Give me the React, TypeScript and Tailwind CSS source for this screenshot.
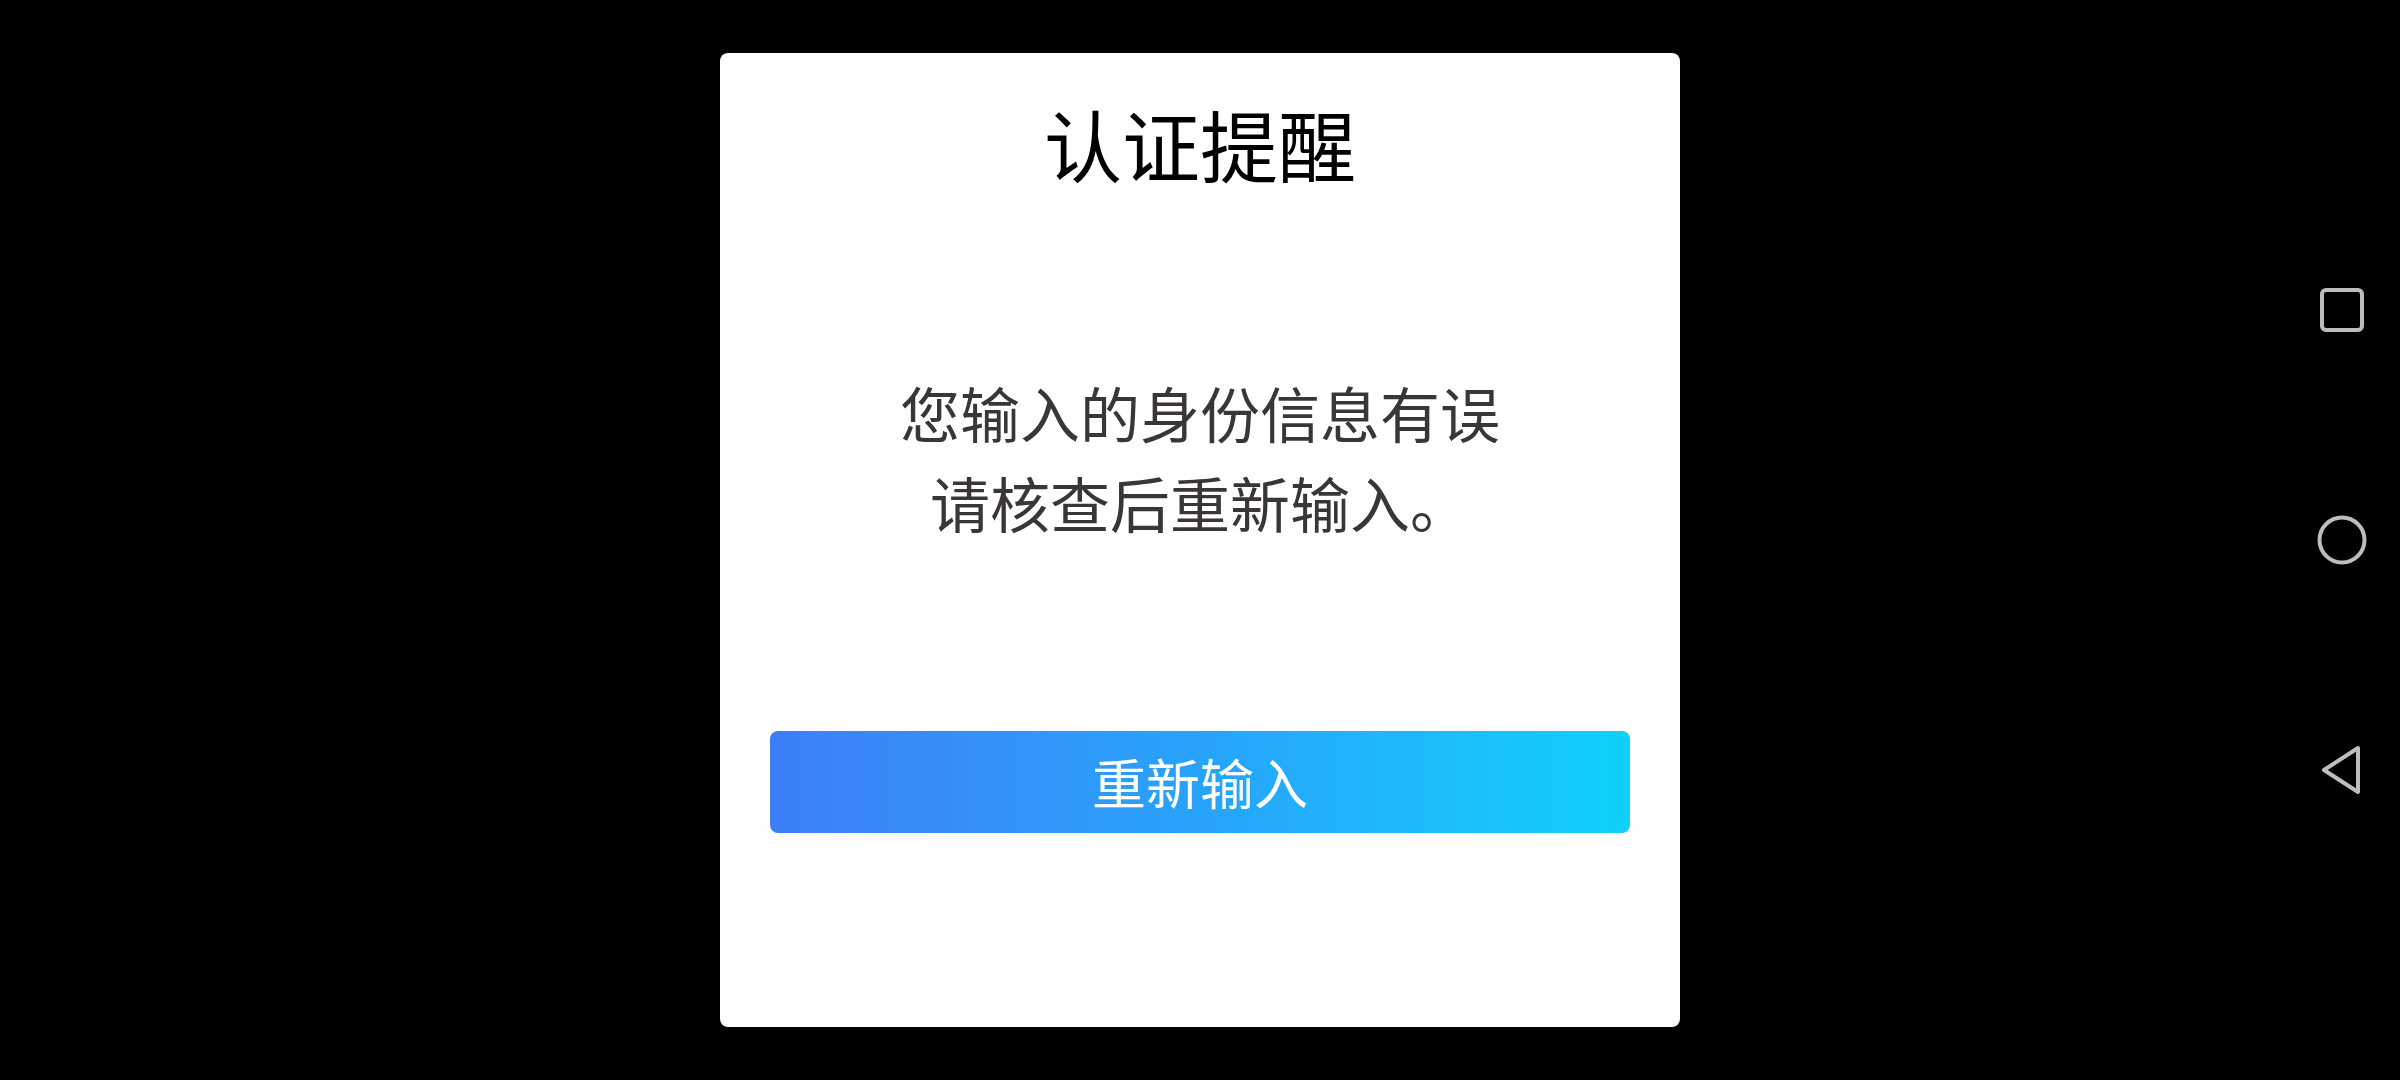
import React from "react";

const font = { fontFamily: '"Noto Sans CJK SC", "Noto Sans", sans-serif' };

function NavSquare() {
  return (
    <svg width="50" height="50" viewBox="0 0 50 50" fill="none">
      <rect x="5" y="5" width="40" height="40" rx="4" stroke="#bdbdbd" strokeWidth="4" />
    </svg>
  );
}

function NavCircle() {
  return (
    <svg width="50" height="50" viewBox="0 0 50 50" fill="none">
      <circle cx="25" cy="25" r="22.5" stroke="#bdbdbd" strokeWidth="4" />
    </svg>
  );
}

function NavBack() {
  return (
    <svg width="50" height="50" viewBox="0 0 50 50" fill="none" className="overflow-visible">
      <path d="M7 25 L41 3 L41 47 Z" stroke="#bdbdbd" strokeWidth="4" strokeLinejoin="round" />
    </svg>
  );
}

export default function App() {
  return (
    <div
      className="w-[2400px] h-[1080px] bg-black grid grid-cols-[1fr_960px_1fr] overflow-hidden"
      style={font}
    >
      <div />
      <div className="pt-[53px]">
        <div className="w-[960px] h-[974px] bg-white rounded-[8px] flex flex-col items-center">
          <div className="pt-[46px] text-[78px] leading-[88px] text-black">认证提醒</div>
          <div className="mt-[180px] text-[60px] leading-[90px] text-[#3a3636] text-center">
            <div>您输入的身份信息有误</div>
            <div>请核查后重新输入。</div>
          </div>
          <button className="mt-[184px] w-[860px] h-[102px] rounded-[8px] bg-gradient-to-r from-[#3d7ef8] via-[#27a3fa] to-[#0fd1fb] text-white text-[54px] leading-[102px] flex items-center justify-center">
            重新输入
          </button>
        </div>
      </div>
      <div className="flex justify-end">
        <div className="w-[116px] h-full flex flex-col items-center justify-center gap-[180px]">
          <NavSquare />
          <NavCircle />
          <NavBack />
        </div>
      </div>
    </div>
  );
}
